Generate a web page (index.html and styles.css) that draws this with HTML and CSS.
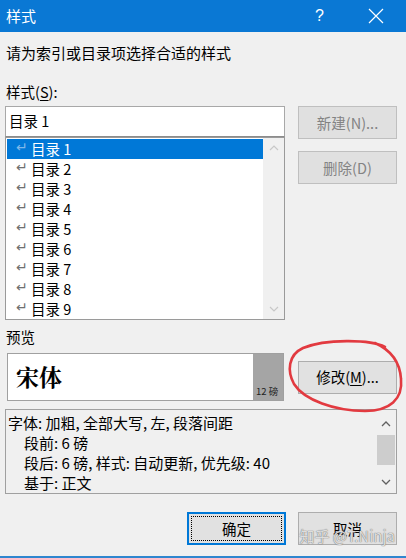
FILE: index.html
```html
<!DOCTYPE html>
<html lang="zh">
<head>
<meta charset="utf-8">
<link rel="stylesheet" href="styles.css">
</head>
<body>
<div class="dialog">
  <div class="titlebar">
    <span class="title">样式</span>
    <span class="help">?</span>
    <span class="close"><svg width="16" height="16" viewBox="0 0 16 16"><path d="M1 1L15 15M15 1L1 15" stroke="#fff" stroke-width="1.2" fill="none"/></svg></span>
  </div>
  <div class="body">
    <div class="desc">请为索引或目录项选择合适的样式</div>
    <div class="label">样式(<u>S</u>):</div>
    <div class="row-main">
      <div class="picker">
        <div class="input">目录 1</div>
        <div class="list">
          <div class="items">
            <div class="item sel"><span class="ret">↵</span>目录 1</div>
            <div class="item"><span class="ret">↵</span>目录 2</div>
            <div class="item"><span class="ret">↵</span>目录 3</div>
            <div class="item"><span class="ret">↵</span>目录 4</div>
            <div class="item"><span class="ret">↵</span>目录 5</div>
            <div class="item"><span class="ret">↵</span>目录 6</div>
            <div class="item"><span class="ret">↵</span>目录 7</div>
            <div class="item"><span class="ret">↵</span>目录 8</div>
            <div class="item"><span class="ret">↵</span>目录 9</div>
          </div>
          <div class="vscroll">
            <svg width="10" height="6" viewBox="0 0 10 6"><path d="M1 5L5 1L9 5" stroke="#c8c8c8" stroke-width="1.2" fill="none"/></svg>
            <svg width="10" height="6" viewBox="0 0 10 6"><path d="M1 1L5 5L9 1" stroke="#c8c8c8" stroke-width="1.2" fill="none"/></svg>
          </div>
        </div>
      </div>
      <div class="side">
        <div class="btn disabled">新建(N)...</div>
        <div class="btn disabled">删除(D)</div>
      </div>
    </div>
    <div class="label preview-label">预览</div>
    <div class="row-preview">
      <div class="preview">
        <div class="sample">宋体</div>
        <div class="size">12 磅</div>
      </div>
      <div class="btn modify">修改(<u>M</u>)...</div>
      <svg class="circle" width="122" height="78" viewBox="0 0 122 78"><path d="M100 8 C85 0 40 0 18 9 C3 16 2 32 9 45 C19 61 50 72 80 72 C105 72 118 60 116 40 C115 24 108 12 90 4" stroke="#e23a40" stroke-width="2.6" fill="none" stroke-linecap="round"/></svg>
    </div>
    <div class="details">
      <div class="dtext">
        <div>字体: 加粗, 全部大写, 左, 段落间距</div>
        <div class="ind">段前: 6 磅</div>
        <div class="ind">段后: 6 磅, 样式: 自动更新, 优先级: 40</div>
        <div class="ind">基于: 正文</div>
      </div>
      <div class="dscroll">
        <svg width="10" height="6" viewBox="0 0 10 6"><path d="M1 5L5 1L9 5" stroke="#606060" stroke-width="1.3" fill="none"/></svg>
        <div class="thumb"></div>
        <svg width="10" height="6" viewBox="0 0 10 6"><path d="M1 1L5 5L9 1" stroke="#606060" stroke-width="1.3" fill="none"/></svg>
      </div>
    </div>
    <div class="row-buttons">
      <div class="btn ok"><span class="focus">确定</span></div>
      <div class="btn">取消</div>
      <span class="watermark">知乎 @T.Ninja</span>
    </div>
  </div>
  <div class="bottomline"></div>
</div>
</body>
</html>
```
FILE: styles.css
```css
* { box-sizing: border-box; }
html, body { margin: 0; padding: 0; }
body {
  width: 406px;
  height: 558px;
  background: #f0f0f0;
  font-family: "Noto Sans CJK SC", "Noto Sans", sans-serif;
  font-size: 14px;
  color: #000;
  overflow: hidden;
}
.dialog { height: 558px; display: flex; flex-direction: column; }
.titlebar {
  height: 32px;
  background: #0a78d4;
  color: #fff;
  display: flex;
  align-items: center;
  padding-left: 6px;
  flex: none;
}
.title { font-size: 15px; flex: 1; line-height: 20px; }
.help { font-family: "Liberation Sans", sans-serif; font-size: 16px; width: 16px; margin-right: 37px; }
.close { width: 16px; margin-right: 22px; display: flex; }
.body { flex: 1; padding: 0 9px 0 5px; position: relative; }
.desc { margin-top: 11px; margin-left: 1px; line-height: 20px; font-size: 15px; }
.label { margin-top: 19px; margin-left: 1px; line-height: 20px; font-size: 14.5px; }
.label u { text-decoration-thickness: 1px; text-underline-offset: 2px; }
.row-main { display: flex; margin-top: 4px; }
.picker { width: 280px; display: flex; flex-direction: column; }
.input {
  height: 31px;
  background: #fff;
  border: 1px solid #a8a8a8;
  border-bottom-color: #8c8c8c;
  padding-left: 3px;
  line-height: 28px;
  font-size: 14.5px;
}
.list {
  height: 183px;
  background: #fff;
  border: 1px solid #9a9a9a;
  display: flex;
  padding: 1px 0 1px 1px;
}
.items { flex: 1; }
.item {
  height: 20px;
  line-height: 20px;
  font-size: 14.5px;
  padding-left: 9px;
  display: flex;
  align-items: center;
}
.item .ret { color: #707070; font-size: 14px; width: 15px; font-family: "DejaVu Sans", sans-serif; position: relative; top: -2px; }
.item.sel { background: #0078d7; color: #fff; }
.item.sel .ret { color: #7fb8ea; }
.vscroll {
  width: 21px;
  background: #f0f0f0;
  display: flex;
  flex-direction: column;
  justify-content: space-between;
  align-items: center;
  padding: 7px 0 7px;
  margin: -1px 0 -1px 0;
}
.side { margin-left: 13px; display: flex; flex-direction: column; gap: 12px; }
.btn {
  width: 99px;
  height: 33px;
  border: 1px solid #adadad;
  background: #e1e1e1;
  display: flex;
  align-items: center;
  justify-content: center;
  font-size: 14.5px;
  line-height: 20px;
}
.btn.disabled { color: #838383; border-color: #bfbfbf; background: #e0e0e0; }
.preview-label { margin-top: 7px; }
.row-preview { display: flex; align-items: center; margin-top: 6px; position: relative; }
.preview {
  margin-left: 2px;
  width: 277px;
  height: 48px;
  border: 1px solid #a0a0a0;
  background: #fff;
  display: flex;
}
.sample {
  flex: 1;
  font-family: "Noto Serif CJK SC", "Noto Sans CJK SC", serif;
  font-weight: bold;
  font-size: 23px;
  line-height: 46px;
  padding-left: 8px;
}
.size {
  width: 30px;
  background: #a5a5a5;
  font-size: 9.5px;
  display: flex;
  align-items: flex-end;
  padding: 0 0 2px 3px;
  color: #222;
  line-height: 14px;
}
.modify { margin-left: 14px; }
.modify u { text-decoration-thickness: 1px; text-underline-offset: 2px; }
.circle { position: absolute; left: 280px; top: -14px; }
.details {
  margin-top: 8px;
  height: 85px;
  border: 1px solid #a0a0a0;
  background: #f0f0f0;
  display: flex;
}
.dtext { flex: 1; padding: 3px 0 0 2px; font-size: 15px; line-height: 20px; }
.dtext .ind { padding-left: 16px; }
.dscroll {
  width: 20px;
  display: flex;
  flex-direction: column;
  align-items: center;
  padding-top: 11px;
}
.dscroll .thumb { width: 18px; height: 30px; background: #cdcdcd; margin: 8px 0 14px; }
.row-buttons { display: flex; justify-content: flex-end; gap: 12px; margin-top: 18px; position: relative; }
.btn.ok { border: 2px solid #0078d7; padding: 2px; }
.btn.ok .focus { border: 1px dotted #000; width: 100%; height: 100%; display: flex; align-items: center; justify-content: center; }
.watermark {
  position: absolute;
  right: 2px;
  top: 15px;
  font-size: 15px;
  color: rgba(255,255,255,0.75);
  text-shadow: 0 0 1px #777, 0 0 1px #777;
  font-family: "Noto Sans CJK SC", sans-serif;
  line-height: 18px;
}
.bottomline { height: 2px; background: #2f86cf; flex: none; margin-top: auto; }
```
